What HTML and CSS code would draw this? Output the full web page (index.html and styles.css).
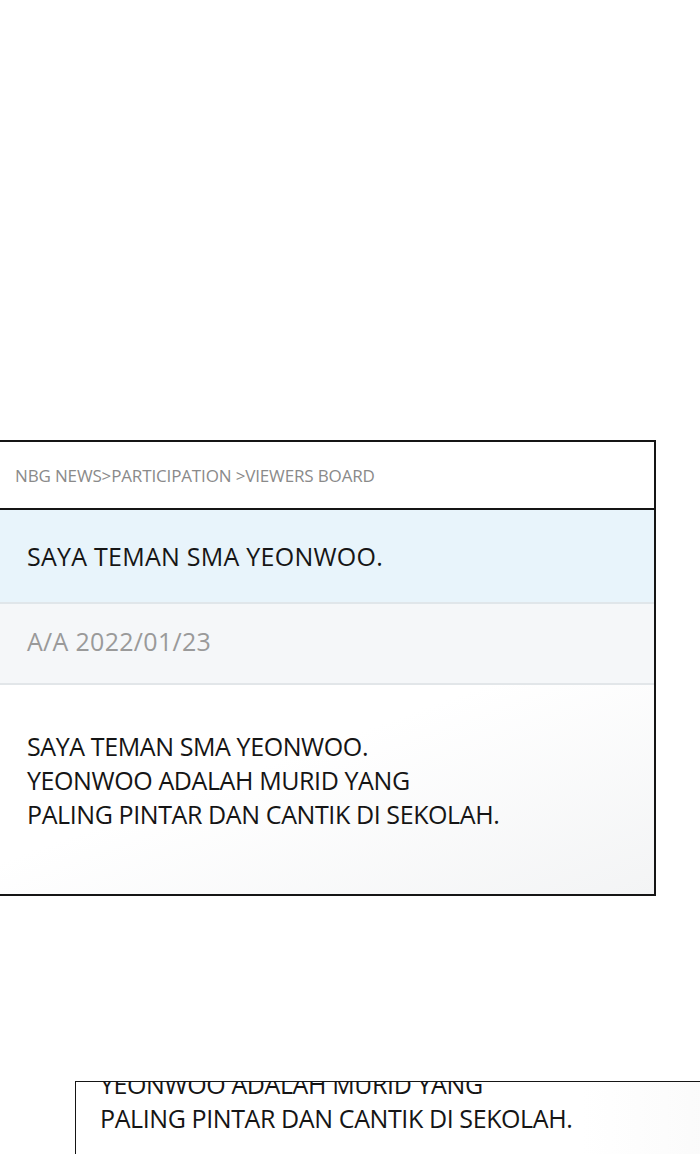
FILE: index.html
```html
<!DOCTYPE html>
<html>
<head>
<meta charset="utf-8">
<link rel="stylesheet" href="styles.css">
</head>
<body>
<div class="page">
  <section class="board">
    <div class="crumb">NBG NEWS&gt;PARTICIPATION &gt;VIEWERS BOARD</div>
    <div class="title">SAYA TEMAN SMA YEONWOO.</div>
    <div class="meta">A/A 2022/01/23</div>
    <div class="body">
      <p>SAYA TEMAN SMA YEONWOO.<br>YEONWOO ADALAH MURID YANG<br>PALING PINTAR DAN CANTIK DI SEKOLAH.</p>
    </div>
  </section>
  <section class="board2">
    <p>SAYA TEMAN SMA YEONWOO.<br>YEONWOO ADALAH MURID YANG<br>PALING PINTAR DAN CANTIK DI SEKOLAH.</p>
  </section>
</div>
</body>
</html>
```
FILE: styles.css
```css
html, body {
  margin: 0;
  padding: 0;
  background: #fff;
  overflow: hidden;
}
.page {
  width: 700px;
  height: 1154px;
  overflow: hidden;
  font-family: "Open Sans", "Noto Sans", sans-serif;
  color: #111;
  display: flex;
  flex-direction: column;
  padding-top: 440px;
  box-sizing: border-box;
}
.board {
  margin-left: -10px;
  width: 666px;
  box-sizing: border-box;
  border: 2px solid #151515;
  display: flex;
  flex-direction: column;
}
.crumb {
  height: 66px;
  border-bottom: 2px solid #151515;
  display: flex;
  align-items: center;
  padding-left: 23px;
  font-size: 17px;
  color: #8a8a8a;
  letter-spacing: -0.15px;
}
.title {
  height: 92px;
  background: #e8f4fb;
  border-bottom: 2px solid #e0e6ea;
  display: flex;
  align-items: center;
  padding-left: 35px;
  font-size: 25px;
  letter-spacing: 0.25px;
  color: #161616;
}
.meta {
  height: 81px;
  background: #f5f7f9;
  border-bottom: 2px solid #e2e6e9;
  display: flex;
  align-items: center;
  padding-left: 35px;
  padding-bottom: 5px;
  box-sizing: border-box;
  font-size: 25px;
  letter-spacing: 0.3px;
  color: #9a9a9a;
}
.body {
  height: 209px;
  background: linear-gradient(160deg, #ffffff 40%, #f3f4f5 100%);
  display: flex;
  align-items: center;
  padding-left: 35px;
  padding-bottom: 20px;
  box-sizing: border-box;
}
.body p, .board2 p {
  margin: 0;
  font-size: 25px;
  line-height: 34px;
  letter-spacing: -0.4px;
  color: #151515;
}
.board2 {
  margin-top: 185px;
  margin-left: 75px;
  width: 700px;
  flex: 1;
  border-top: 1px solid #151515;
  border-left: 1px solid #151515;
  overflow: hidden;
  padding-left: 24px;
  background: linear-gradient(90deg, #fff 70%, #f7f7f7 100%);
}
.board2 p {
  margin-top: -49px;
}
```
